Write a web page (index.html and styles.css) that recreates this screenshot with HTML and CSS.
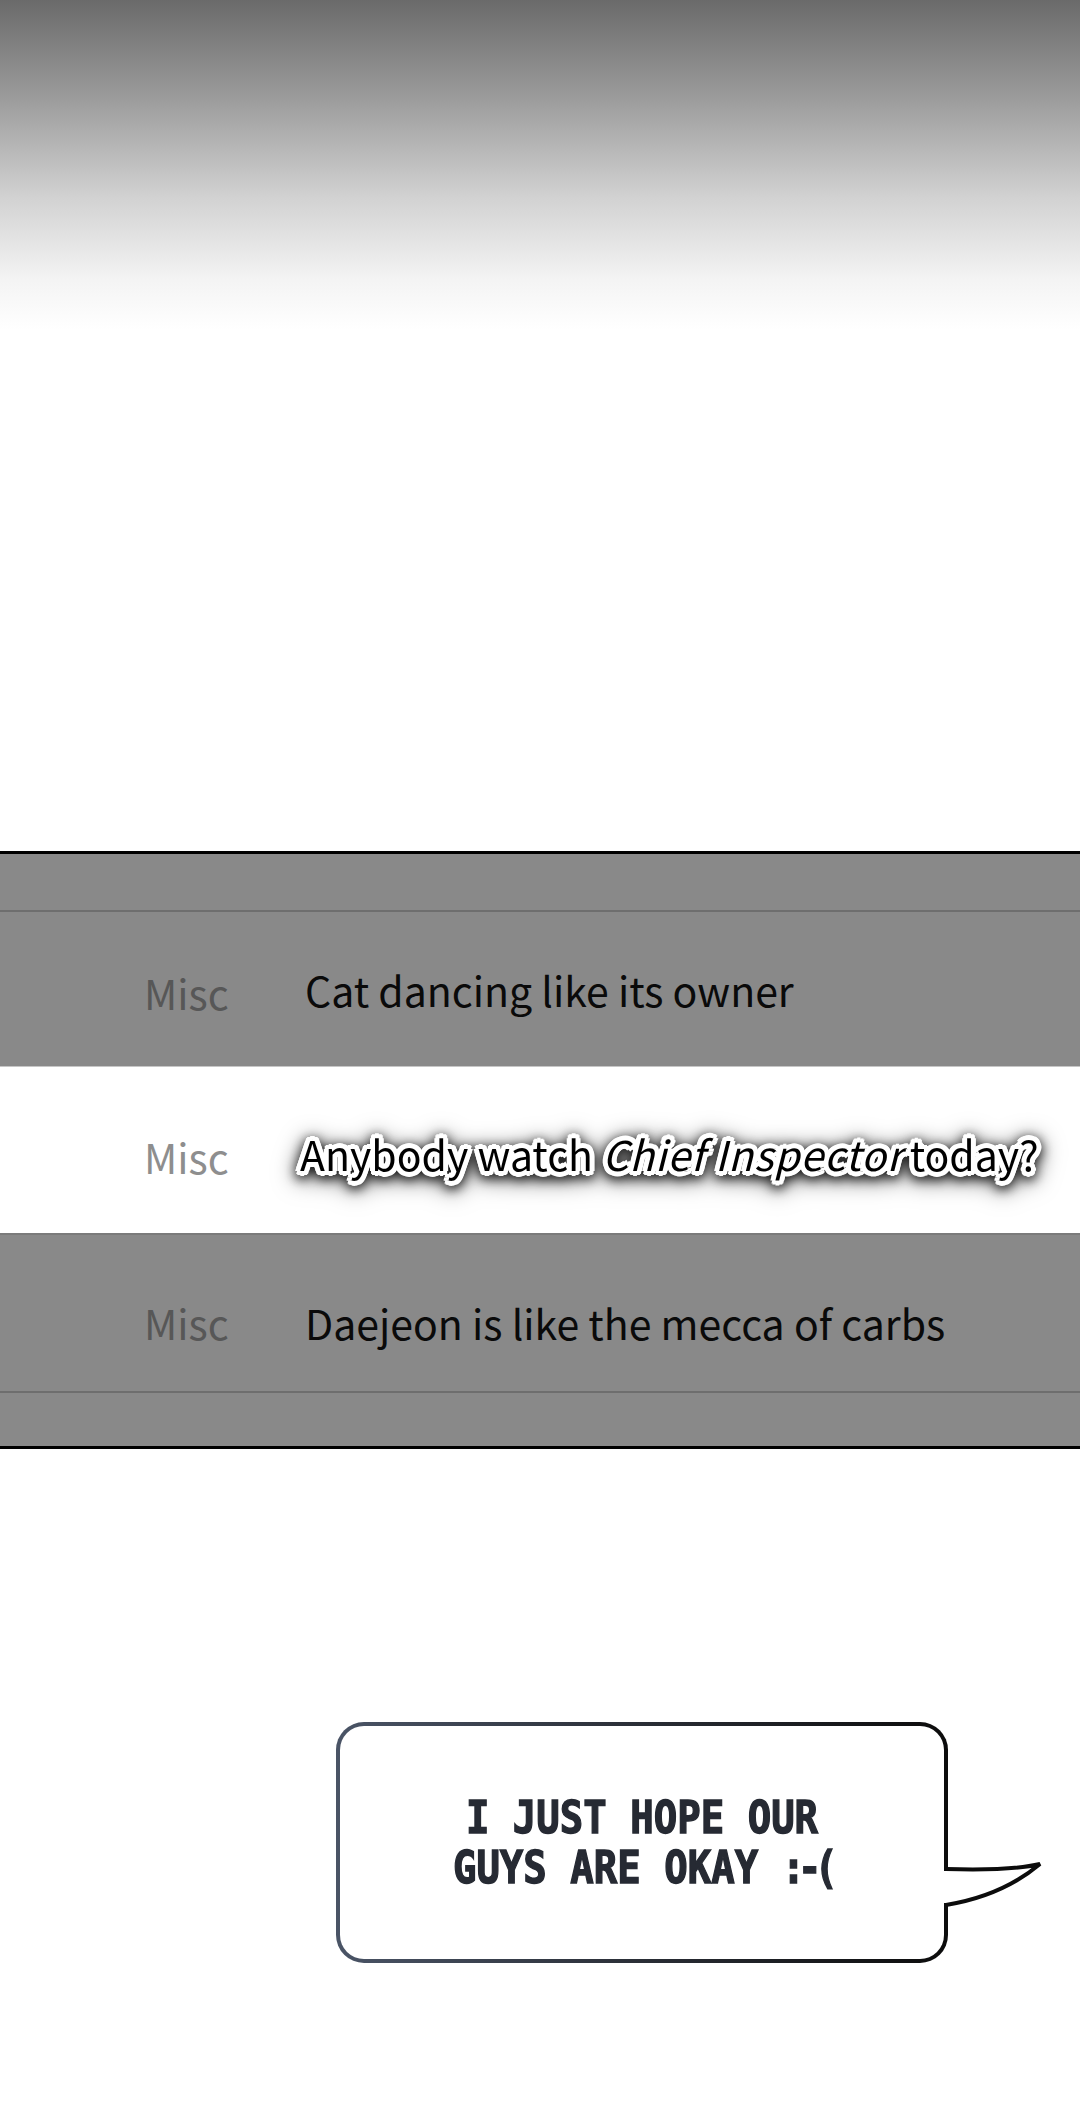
FILE: index.html
```html
<!DOCTYPE html>
<html>

<head>
    <title>Board</title>
    <link rel="stylesheet" href="styles.css">
</head>

<body>
    <div class="fade"></div>

    <section class="board">
        <div class="band band-top"></div>
        <div class="post dim first">
            <span class="cat">Misc</span>
            <span class="title">Cat dancing like its owner</span>
        </div>
        <div class="post lit">
            <span class="cat">Misc</span>
            <span class="title glow">Anybody watch <i>Chief Inspector</i>today?</span>
        </div>
        <div class="post dim last">
            <span class="cat">Misc</span>
            <span class="title">Daejeon is like the mecca of carbs</span>
        </div>
        <div class="band band-bottom"></div>
    </section>

    <div class="bubble">
        <p class="line">I JUST HOPE OUR</p>
        <p class="line">GUYS ARE OKAY <span class="face">:-(</span></p>
        <svg class="tail" width="104" height="52" viewBox="0 0 104 52">
            <rect x="2" y="13" width="9" height="32" fill="#fff" />
            <path d="M6 11 Q70 13 100 6 Q62 38 6 47" fill="#fff" stroke="#0c0c0c" stroke-width="4"
                stroke-linejoin="miter" />
        </svg>
    </div>
</body>

</html>
```

FILE: styles.css
```css
body {
    margin: 0;
    background-color: white;
    font-family: "Noto Sans CJK KR", "Noto Sans", sans-serif;
}

.fade {
    height: 330px;
    background: linear-gradient(#6a6a6a, #9c9c9c 30%, #d2d2d2 60%, #f4f4f4 85%, #ffffff);
}

.board {
    margin-top: 521px;
    border-top: 3px solid #000;
    border-bottom: 3px solid #000;
}

.band {
    background-color: #898989;
}

.band-top {
    height: 56px;
    border-bottom: 2px solid #6e6e6e;
}

.band-bottom {
    height: 53px;
}

.post {
    display: grid;
    grid-template-columns: 305px 1fr;
    align-items: center;
    font-size: 41px;
    box-sizing: border-box;
}

.dim {
    background-color: #898989;
}

.first {
    height: 155px;
    border-bottom: 1px solid #c6c6c6;
}

.lit {
    height: 168px;
    padding-top: 6px;
    background-color: #fff;
    border-bottom: 2px solid #7b7b7b;
}

.last {
    height: 158px;
    padding-top: 18px;
    border-bottom: 2px solid #6e6e6e;
}

.cat {
    padding-left: 144px;
    padding-top: 6px;
    color: #575757;
}

.last .cat {
    padding-top: 0;
}

.lit .cat {
    color: #8e8e8e;
}

.title {
    color: #0a0a0a;
    white-space: nowrap;
}

.glow {
    margin-left: -5px;
    color: #000;
    text-shadow:
        5px 0 0 #fff, -5px 0 0 #fff, 0 5px 0 #fff, 0 -5px 0 #fff,
        4px 3px 0 #fff, -4px 3px 0 #fff, 4px -3px 0 #fff, -4px -3px 0 #fff,
        3px 4px 0 #fff, -3px 4px 0 #fff, 3px -4px 0 #fff, -3px -4px 0 #fff,
        0 0 3px #fff;
    filter: drop-shadow(0 3px 6px rgba(0, 0, 0, 0.85)) drop-shadow(0 2px 10px rgba(0, 0, 0, 0.5));
}

.glow i {
    letter-spacing: 0.9px;
    margin-right: 6px;
}

.bubble {
    position: relative;
    box-sizing: border-box;
    width: 612px;
    height: 241px;
    margin: 273px 0 0 336px;
    border: 4px solid transparent;
    border-radius: 28px;
    background:
        linear-gradient(#fff, #fff) padding-box,
        linear-gradient(90deg, #4a5466, #2a2e36 50%, #0c0c0c) border-box;
    display: flex;
    flex-direction: column;
    justify-content: center;
    align-items: center;
}

.line {
    margin: 0;
    font-family: "DejaVu Sans Mono", monospace;
    font-weight: bold;
    font-size: 39px;
    line-height: 50px;
    color: #262a33;
    -webkit-text-stroke: 1.2px #262a33;
    transform: scaleY(1.15);
}

.face {
    letter-spacing: -7px;
}

.tail {
    position: absolute;
    left: 600px;
    top: 132px;
}
```
